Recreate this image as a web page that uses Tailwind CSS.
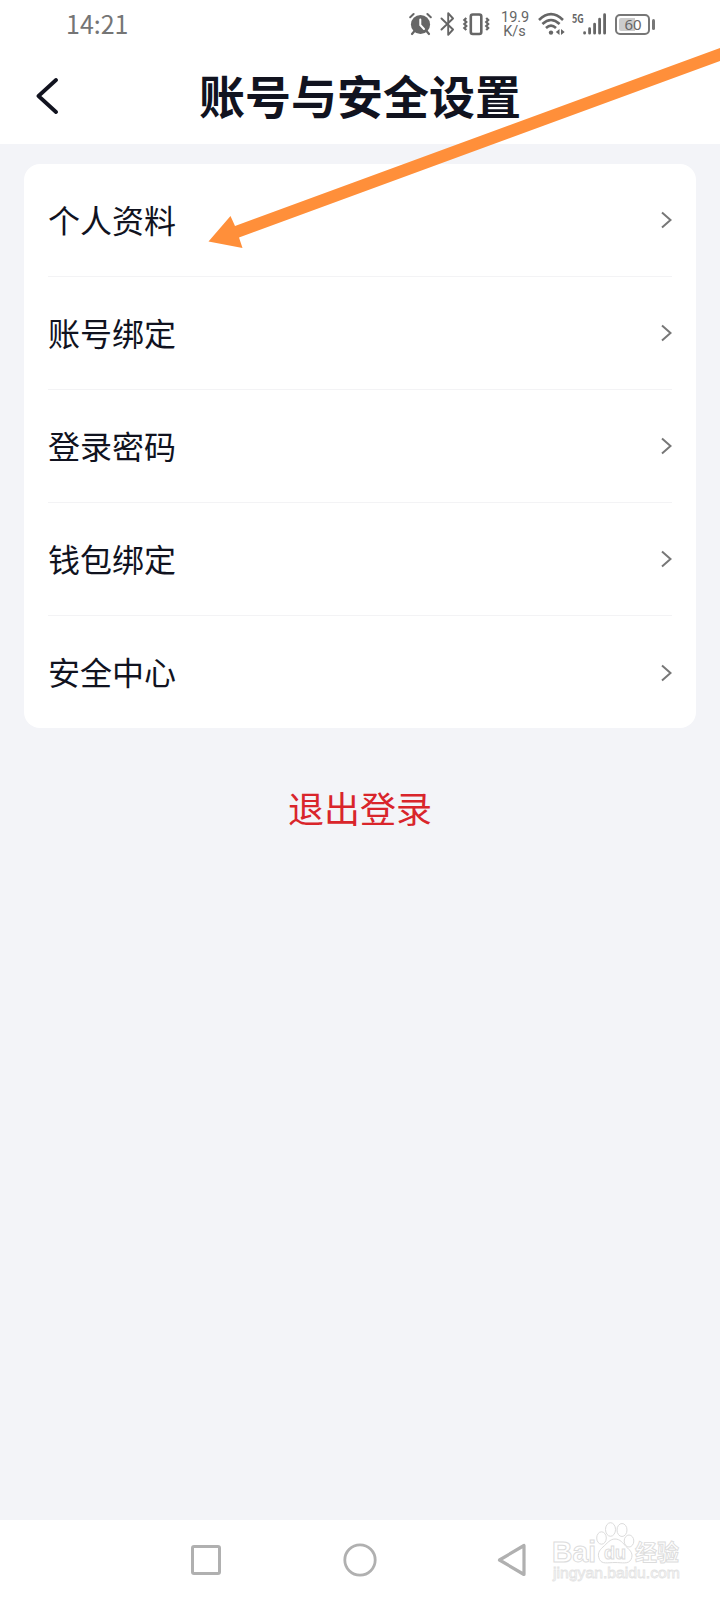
<!DOCTYPE html>
<html lang="zh-CN">

<head>
    <meta charset="UTF-8">
    <meta name="viewport" content="width=device-width, initial-scale=1.0">
    <script src="https://cdn.jsdelivr.net/npm/@tailwindcss/browser@4"></script>
    <title>账号与安全设置</title>
</head>

<body class="bg-[#f3f4f8] font-['Noto_Sans_CJK_SC',sans-serif] text-[#11131f]">
    <div class="relative w-[720px] h-[1600px] flex flex-col overflow-hidden">

        <!-- Status bar -->
        <div class="h-12 shrink-0 bg-white flex items-center pl-[66px] text-[#666]">
            <span class="w-[343px] pb-px text-[25px] leading-none font-normal text-[#757575]">14:21</span>

            <!-- Alarm -->
            <svg class="w-6 h-6 mr-[7px]" viewBox="0 0 24 24" fill="none" stroke="#666">
                <circle cx="11.5" cy="12.5" r="9.6" fill="#666" stroke="none" />
                <path d="M1.2 5.2L4.6 2M21.8 5.2L18.4 2" stroke-width="2" stroke-linecap="round" />
                <path d="M5.5 19L3 22M17.5 19L20 22" stroke-width="2.2" stroke-linecap="round" />
                <path d="M11.3 7.5V13L15 17" stroke="#fff" stroke-width="2" stroke-linecap="round" />
            </svg>
            <!-- Bluetooth -->
            <svg class="w-4 h-6 mr-1.5" viewBox="0 0 16 24" fill="none" stroke="#666" stroke-width="1.9" stroke-linejoin="round" stroke-linecap="round">
                <path d="M1.5 6.5L13 17.5L8.2 22.8V1.2L13 6.5L1.5 17.5" />
            </svg>
            <!-- Vibrate -->
            <svg class="w-7 h-6 mr-[11px]" viewBox="0 0 28 24" fill="none" stroke="#666">
                <rect x="8.8" y="2.5" width="10.5" height="19.5" rx="2" stroke-width="2.6" />
                <path d="M4.3 6L2.3 8L4.3 10L2.3 12L4.3 14L2.3 16L4.3 18" stroke-width="2.2" />
                <path d="M24.2 6L26.2 8L24.2 10L26.2 12L24.2 14L26.2 16L24.2 18" stroke-width="2.2" />
            </svg>
            <div class="w-[27px] mr-2.5 font-[Roboto,sans-serif] text-[14.5px] leading-[15px] text-center">
                <div>19.9</div>
                <div class="-mt-px">K/s</div>
            </div>
            <!-- Wifi -->
            <svg class="w-7 h-6 mr-1.5" viewBox="0 0 28 24" fill="none" stroke="#666">
                <path d="M1 8Q13 -3.6 25 8" stroke-width="2.6" />
                <path d="M4.4 12Q13 4 21.6 12" stroke-width="2.6" />
                <path d="M8 16Q13 11.4 18 16" stroke-width="2.6" />
                <circle cx="13" cy="20.6" r="2.2" fill="#666" stroke="none" />
                <path d="M21.5 17V23L17.8 20ZM23 17V23L26.700 20Z" fill="#666" stroke="none" />
            </svg>
            <!-- Signal -->
            <span class="w-[11px] -mt-[13px] text-[12px] leading-none font-bold"><span class="inline-block origin-left scale-x-75">5G</span></span>
            <svg class="w-6 h-6 mr-2" viewBox="0 0 24 24" fill="none" stroke="#666" stroke-width="2.8" stroke-linecap="round">
                <path d="M1.6 20.7V21.2M6.6 16.7V21.2M11.6 12.2V21.2M16.6 7.2V21.2M21.6 2.7V21.2" />
            </svg>
            <!-- Battery -->
            <div class="relative w-[35px] h-[21px] rounded-[5px] border-2 border-[#777] p-[2px]">
                <div class="w-4 h-full bg-[#ccc] rounded-l-xs"></div>
                <span class="absolute inset-0 flex items-center justify-center pl-px font-['Noto_Sans',sans-serif] text-[15px] leading-none">60</span>
            </div>
            <div class="w-[3px] h-[11px] ml-[2px] bg-[#777] rounded-full"></div>
        </div>

        <!-- Header -->
        <header class="h-24 shrink-0 bg-white flex items-center pl-[35px]">
            <svg class="w-6 h-9" viewBox="0 0 24 36" fill="none" stroke="#11131f" stroke-width="3.8" stroke-linecap="round" stroke-linejoin="round">
                <path d="M21 2L3.500 18L21 34" />
            </svg>
            <h1 class="w-[322px] ml-[140px] pb-[5px] text-[46px] leading-none font-bold whitespace-nowrap">账号与安全设置</h1>
        </header>

        <!-- Settings list -->
        <ul class="mx-6 mt-5 h-[564px] shrink-0 bg-white rounded-2xl px-6 grid auto-rows-[113px] divide-y divide-[#f3f3f5] text-[32px] leading-none">
            <li class="flex items-center justify-between">
                <span class="pb-[3px]">个人资料</span>
                <svg class="w-3 h-[18px]" viewBox="0 0 12 18" fill="none" stroke="#777" stroke-width="2"><path d="M2 1.5L10.5 9L2 16.5" /></svg>
            </li>
            <li class="flex items-center justify-between">
                <span class="pb-[3px]">账号绑定</span>
                <svg class="w-3 h-[18px]" viewBox="0 0 12 18" fill="none" stroke="#777" stroke-width="2"><path d="M2 1.5L10.5 9L2 16.5" /></svg>
            </li>
            <li class="flex items-center justify-between">
                <span class="pb-[3px]">登录密码</span>
                <svg class="w-3 h-[18px]" viewBox="0 0 12 18" fill="none" stroke="#777" stroke-width="2"><path d="M2 1.5L10.5 9L2 16.5" /></svg>
            </li>
            <li class="flex items-center justify-between">
                <span class="pb-[3px]">钱包绑定</span>
                <svg class="w-3 h-[18px]" viewBox="0 0 12 18" fill="none" stroke="#777" stroke-width="2"><path d="M2 1.5L10.5 9L2 16.5" /></svg>
            </li>
            <li class="flex items-center justify-between">
                <span class="pb-[3px]">安全中心</span>
                <svg class="w-3 h-[18px]" viewBox="0 0 12 18" fill="none" stroke="#777" stroke-width="2"><path d="M2 1.5L10.5 9L2 16.5" /></svg>
            </li>
        </ul>

        <button class="mt-[61px] mx-auto text-[36px] leading-none text-[#d9252b]">退出登录</button>

        <!-- System navigation -->
        <nav class="mt-auto h-20 shrink-0 bg-white flex items-center pl-[190px]">
            <svg class="w-8 h-8 mr-[122px]" viewBox="0 0 32 32" fill="none" stroke="#b0b0b0" stroke-width="3">
                <rect x="2.5" y="2.5" width="27" height="27" rx="1.5" />
            </svg>
            <svg class="w-[34px] h-[34px] -mx-px mr-[120px]" viewBox="0 0 34 34" fill="none" stroke="#b0b0b0" stroke-width="2.8">
                <circle cx="17" cy="17" r="15.2" />
            </svg>
            <svg class="w-8 h-9" viewBox="0 0 32 36" fill="none" stroke="#b0b0b0" stroke-width="3.2" stroke-linejoin="round">
                <path d="M2.5 18L27 3.500V32.500Z" />
            </svg>
        </nav>

        <!-- Watermark -->
        <svg class="absolute left-[545px] top-[1515px] w-[140px] h-[75px]" viewBox="0 0 140 75" fill="#fff" stroke="#dcdcdc" stroke-width="1">
            <text x="7" y="47" font-family="Liberation Sans, sans-serif" font-weight="bold" font-size="29" textLength="44" lengthAdjust="spacingAndGlyphs">Bai</text>
            <ellipse cx="56.5" cy="23" rx="4.8" ry="6.2" />
            <ellipse cx="65.5" cy="14.5" rx="5" ry="6.8" />
            <ellipse cx="77" cy="15" rx="5" ry="6.5" />
            <ellipse cx="84" cy="26" rx="4.8" ry="6" />
            <path d="M70 24C75 24 78 28 81 31.5C86 36 88.500 39 86 44.500C83.500 49.500 77 47.500 70 47.500C63 47.500 57 49.500 54.500 44.500C52 39 54 35.500 58 32C62 28.500 65 24 70 24Z" />
            <text x="59" y="44" font-family="Liberation Sans, sans-serif" font-size="19" font-weight="bold" textLength="22" lengthAdjust="spacingAndGlyphs">du</text>
            <text x="90" y="45" font-family="Noto Sans CJK SC, sans-serif" font-size="22" font-weight="bold" stroke-width="0.9">经验</text>
            <text x="8" y="63" font-family="Liberation Sans, sans-serif" font-size="15" stroke="#e3e3e3" stroke-width="0.8" textLength="127" lengthAdjust="spacingAndGlyphs">jingyan.baidu.com</text>
        </svg>

        <!-- Arrow pointing at the first row -->
        <svg class="absolute inset-0 w-[720px] h-[260px]" viewBox="0 0 720 260" fill="#ff8f3a">
            <path d="M208.500 241.500L230.500 216L235 226L720 48V61L239 237.500L242.500 248Z" />
        </svg>
    </div>
</body>

</html>
